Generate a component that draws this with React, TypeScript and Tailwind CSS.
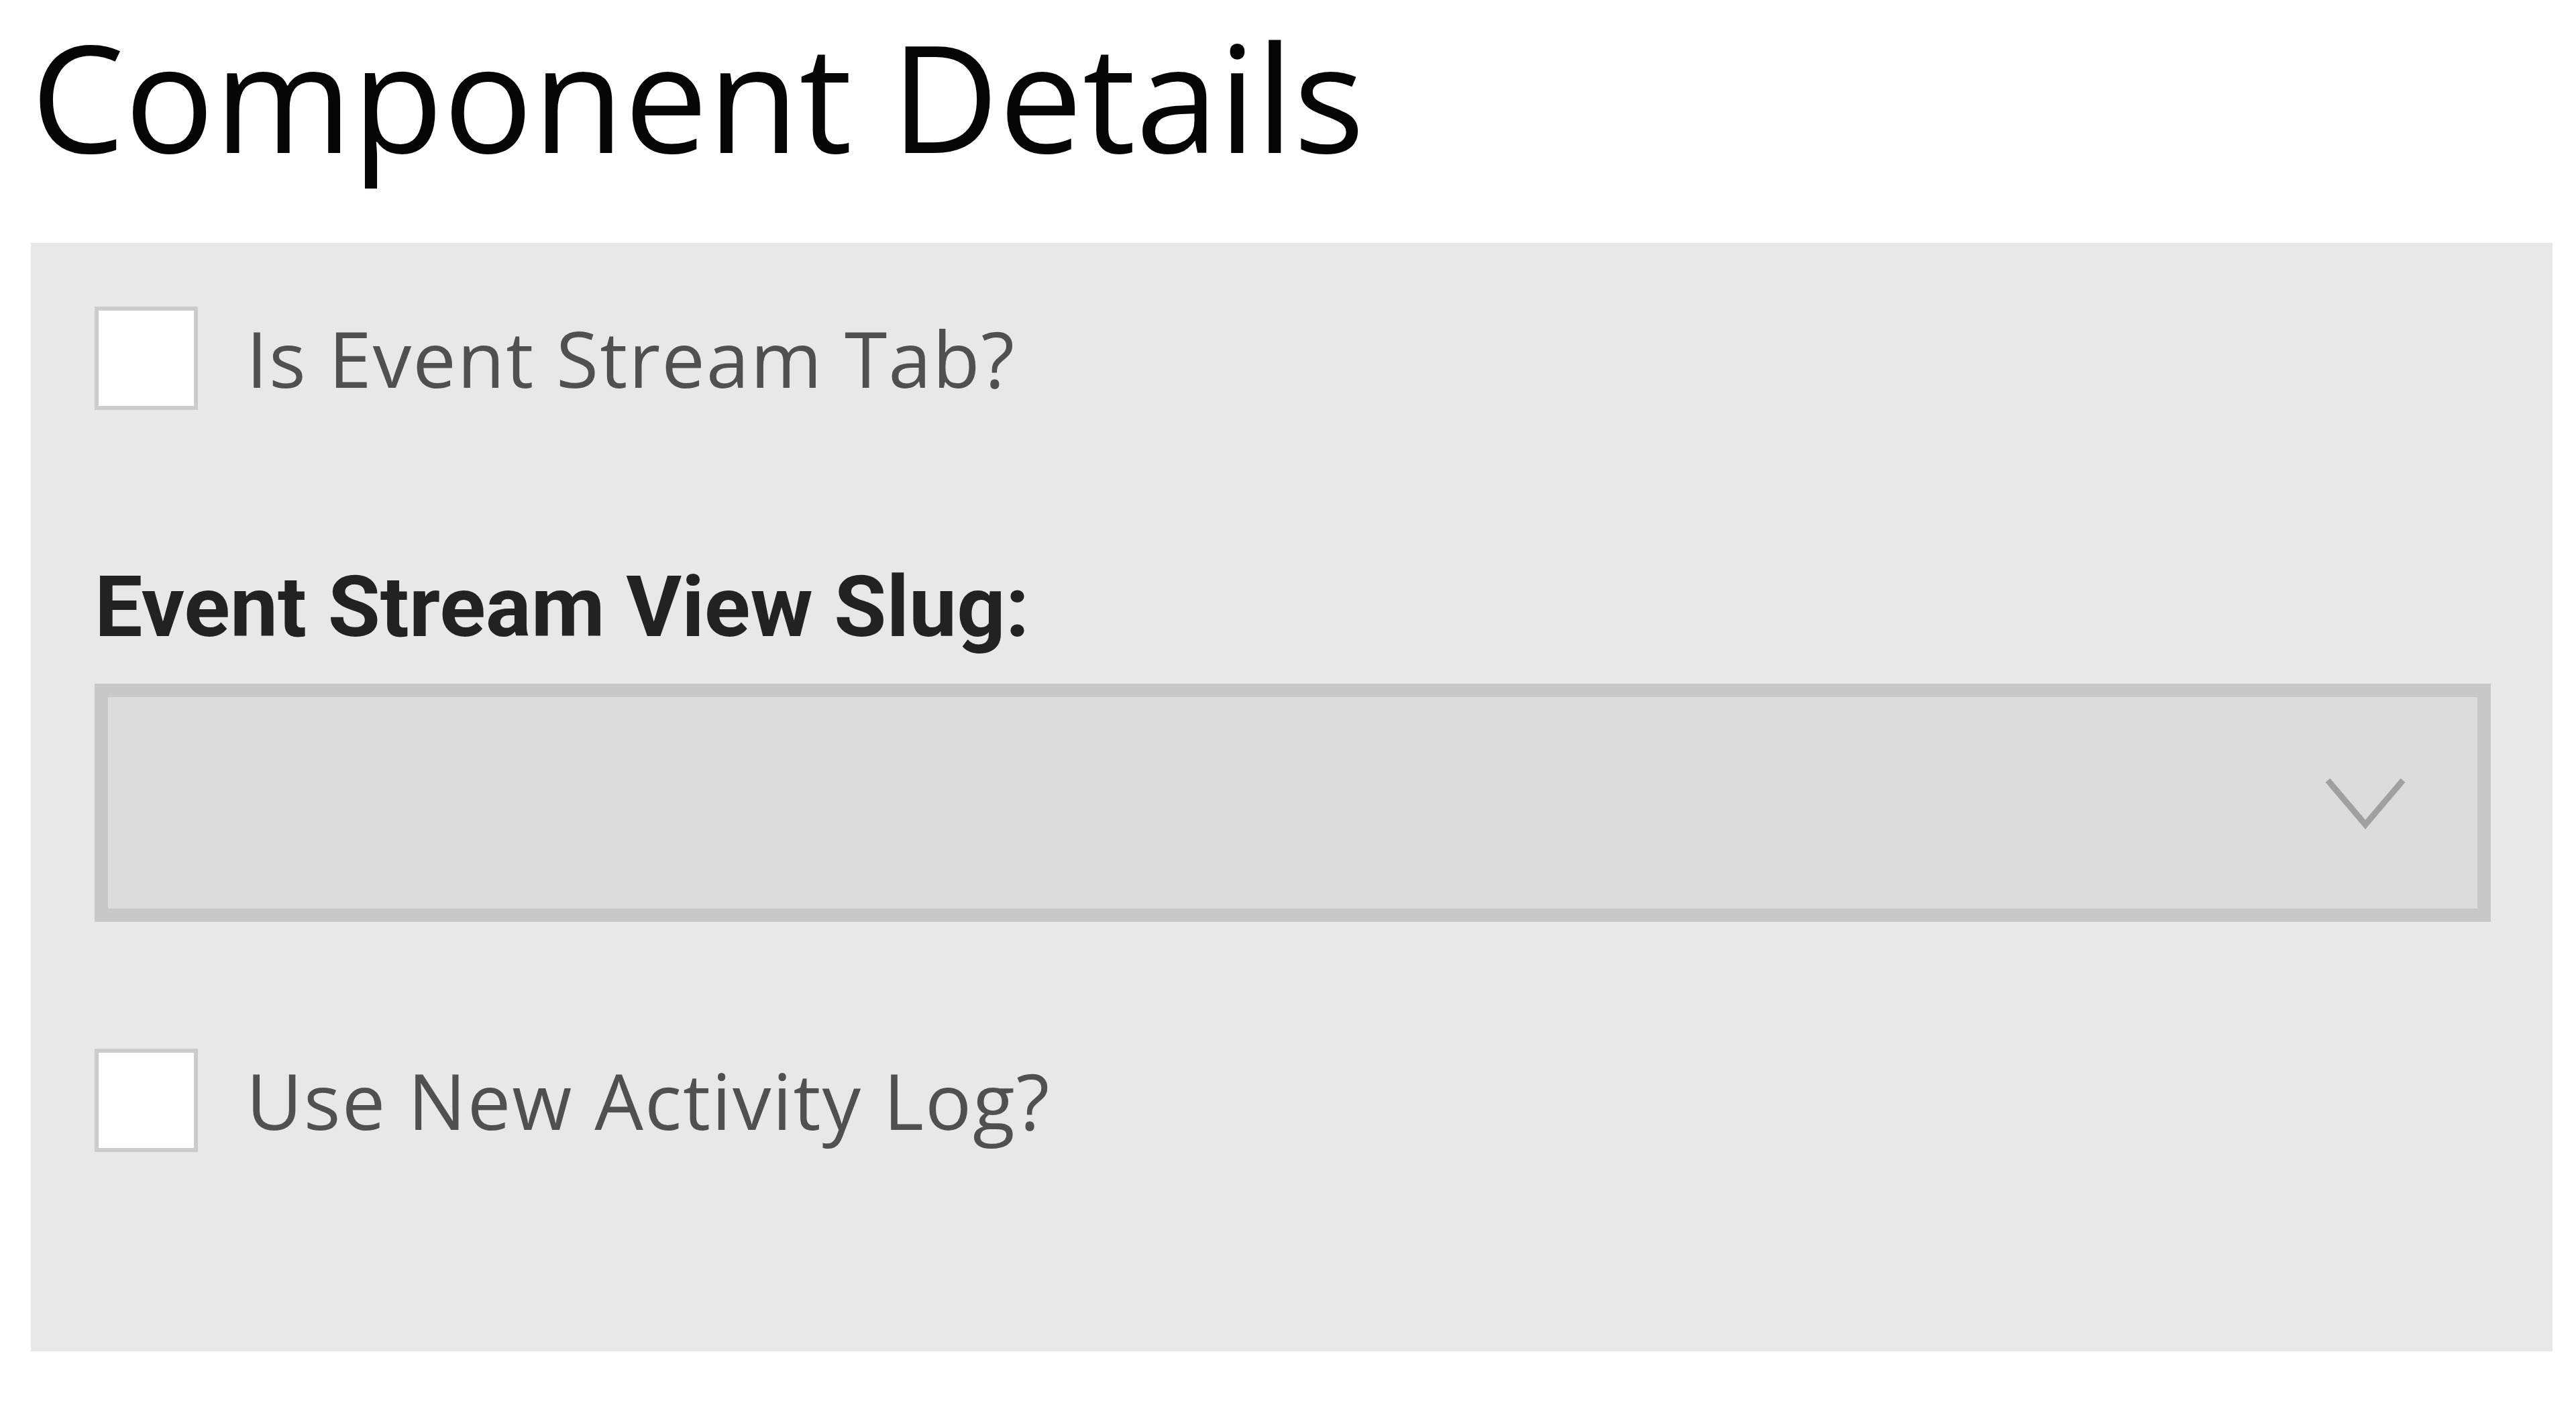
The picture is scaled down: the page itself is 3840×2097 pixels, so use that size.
import { useState } from 'react';

const Checkbox = ({ label }: { label: string }) => {
  const [checked, setChecked] = useState(false);
  return (
    <label className="flex items-center gap-[72px] cursor-pointer select-none">
      <input
        type="checkbox"
        checked={checked}
        onChange={() => setChecked(!checked)}
        className="appearance-none w-[154px] h-[154px] bg-white border-[6px] border-[#cccccc] shrink-0 m-0"
      />
      <span className="text-[115px] leading-[1.2] tracking-[2px] text-[#505050] font-['Open_Sans',sans-serif]">{label}</span>
    </label>
  );
};

export default function App() {
  return (
    <div className="bg-white min-h-screen pl-[46px] pr-[35px]">
      <h1 className="pt-[9px] text-[222px] leading-[1.2] text-[#050505] font-['Open_Sans',sans-serif] font-normal">
        Component Details
      </h1>

      <div className="mt-[87px] bg-[#e8e8e8] pl-[95px] pr-[92px] pt-[95px] pb-[297px]">
        <Checkbox label="Is Event Stream Tab?" />

        <div className="mt-[230px] text-[127px] leading-none font-bold text-[#222222] font-['Roboto',sans-serif]">
          Event Stream View Slug:
        </div>

        <div className="mt-[51px] h-[355px] bg-[#dcdcdc] border-[20px] border-[#c8c8c8] flex items-center justify-end pr-[105px]">
          <svg width="124" height="80" viewBox="0 0 124 80" fill="none">
            <polyline points="6,6 62,72 118,6" stroke="#a0a0a0" strokeWidth="9" />
          </svg>
        </div>

        <div className="mt-[189px]">
          <Checkbox label="Use New Activity Log?" />
        </div>
      </div>
    </div>
  );
}
